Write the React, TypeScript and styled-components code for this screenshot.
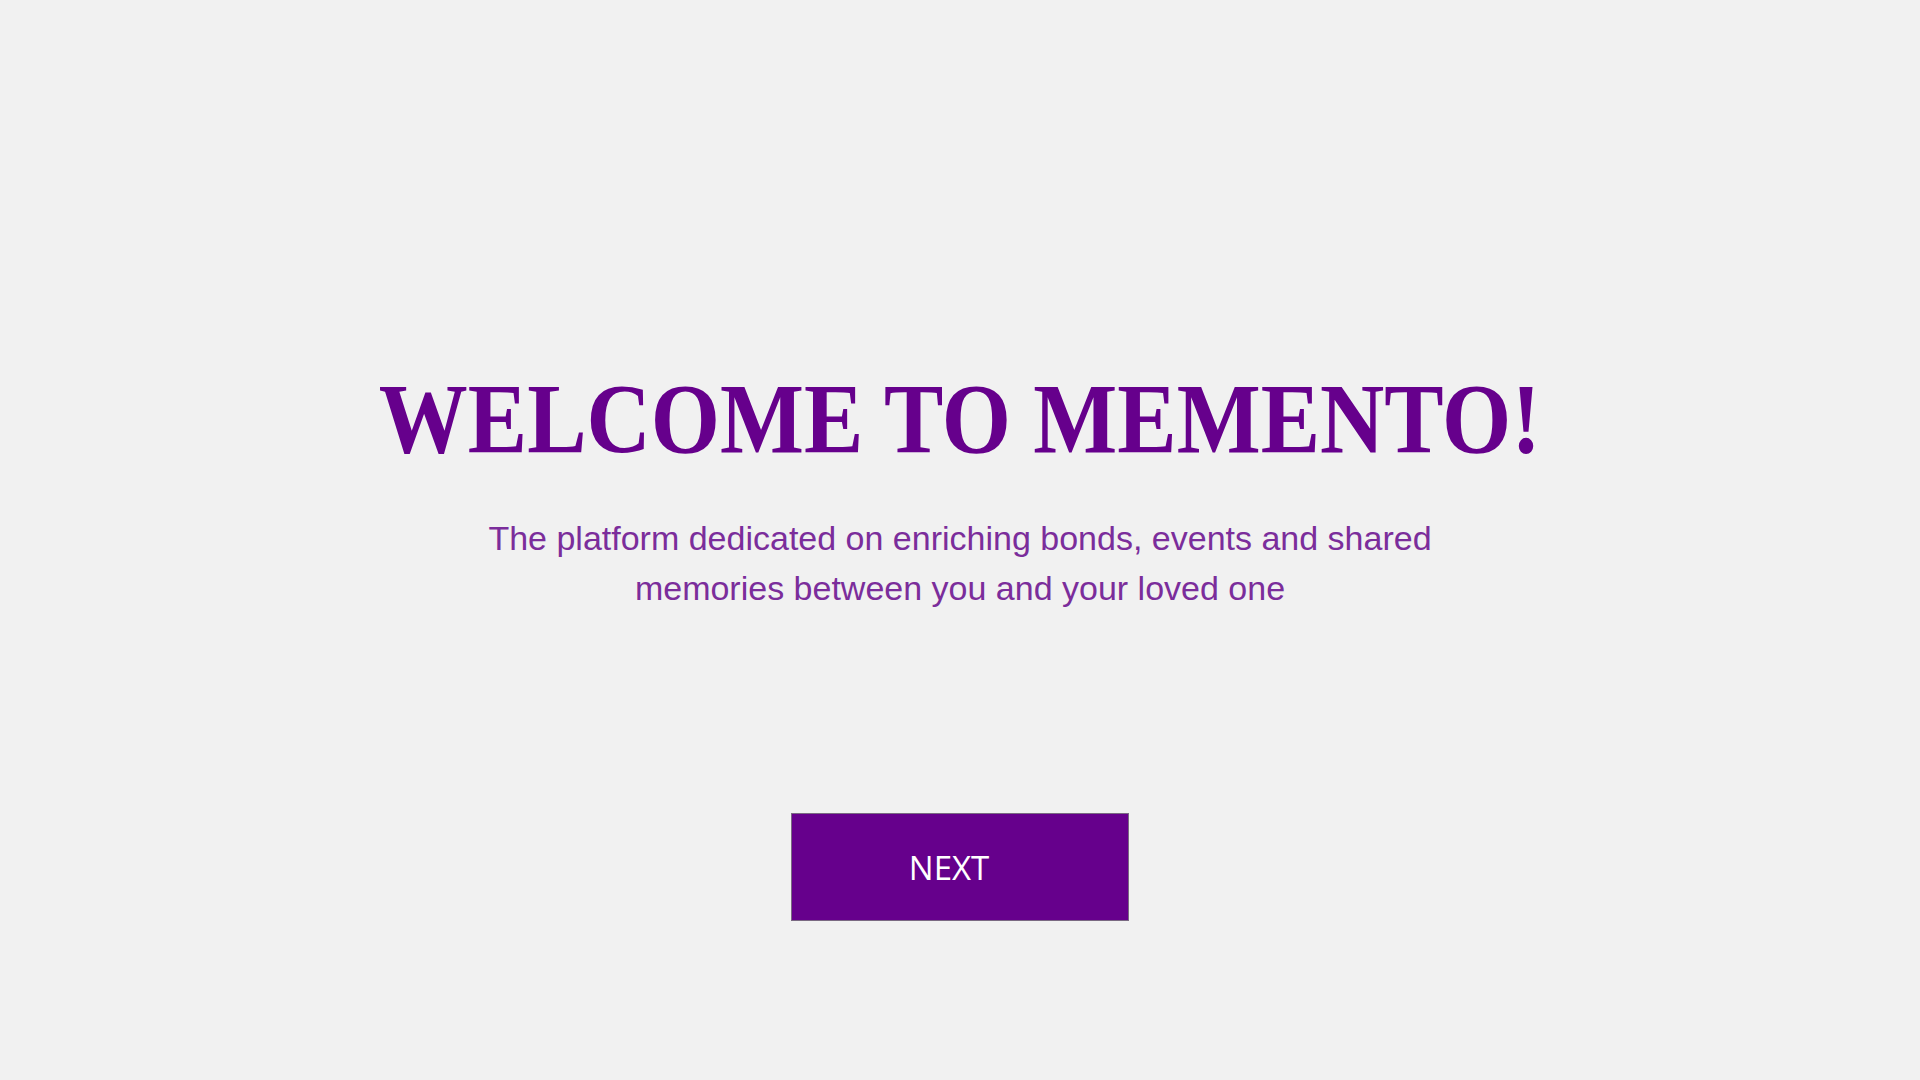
import React from "react";
import styled, { createGlobalStyle } from "styled-components";

const Global = createGlobalStyle`
  html, body { margin: 0; padding: 0; background: #f1f1f1; }
  body { font-family: "Liberation Sans", Arial, sans-serif; }
`;

const Page = styled.main`
  min-height: 100vh;
  display: flex;
  flex-direction: column;
  align-items: center;
  padding-top: 369px;
  box-sizing: border-box;
`;

const Title = styled.h1`
  margin: 0;
  font-family: "Liberation Serif", "Times New Roman", serif;
  font-weight: 700;
  font-size: 100px;
  line-height: 1;
  color: #66008c;
  letter-spacing: 0;
  transform: scaleX(0.89);
  white-space: nowrap;
`;

const Subtitle = styled.p`
  margin: 44px 0 0;
  width: 1000px;
  text-align: center;
  font-family: "Liberation Sans", Arial, sans-serif;
  font-size: 34px;
  line-height: 50px;
  color: #7b2d9b;
`;

const NextButton = styled.button`
  margin-top: 200px;
  width: 338px;
  height: 108px;
  background: #66008c;
  border: 1px solid #7a6a82;
  color: #ffffff;
  font-family: "Open Sans", "Noto Sans", sans-serif;
  font-size: 33px;
  cursor: pointer;
  padding: 0 22px 0 0;
`;

export default function App() {
  return (
    <>
      <Global />
      <Page>
        <Title>WELCOME TO MEMENTO!</Title>
        <Subtitle>
          The platform dedicated on enriching bonds, events and shared memories
          between you and your loved one
        </Subtitle>
        <NextButton>NEXT</NextButton>
      </Page>
    </>
  );
}
